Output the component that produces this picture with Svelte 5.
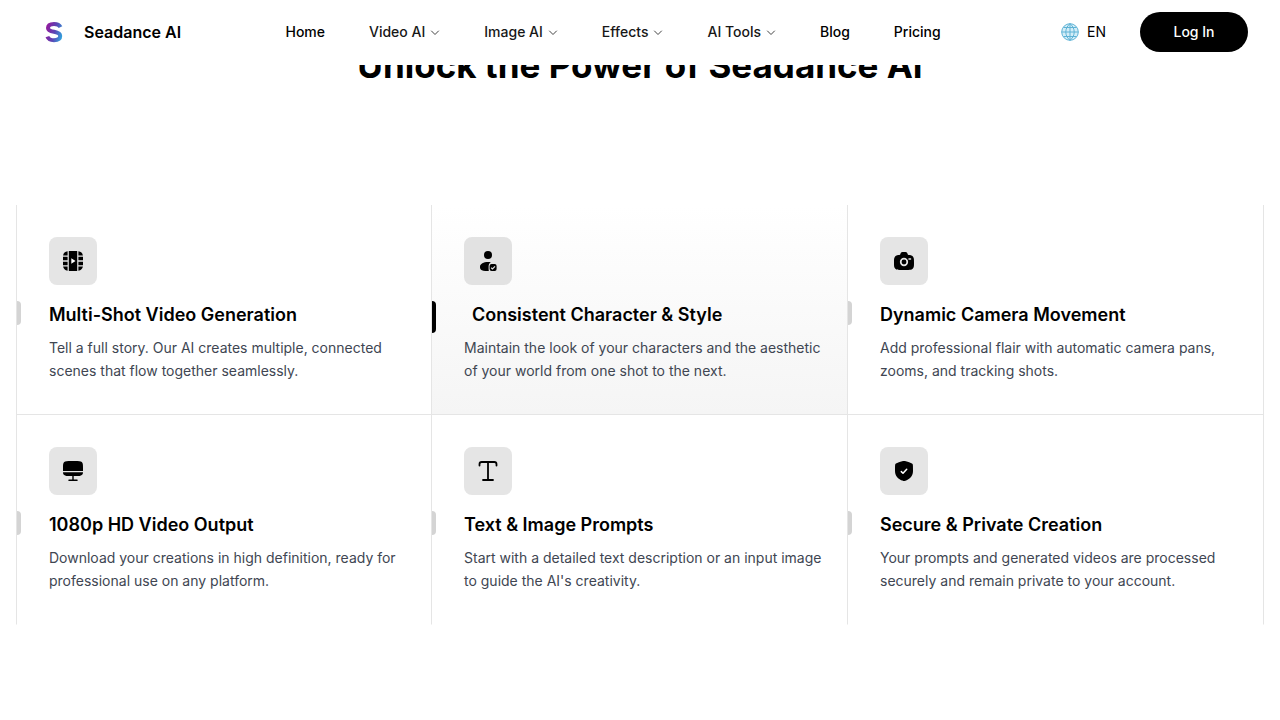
<script>
  const links = [
    { label: 'Home' },
    { label: 'Video AI', menu: true },
    { label: 'Image AI', menu: true },
    { label: 'Effects', menu: true },
    { label: 'AI Tools', menu: true },
    { label: 'Blog' },
    { label: 'Pricing' }
  ];

  const features = [
    {
      icon: 'film',
      title: 'Multi-Shot Video Generation',
      text: 'Tell a full story. Our AI creates multiple, connected scenes that flow together seamlessly.'
    },
    {
      icon: 'user',
      title: 'Consistent Character & Style',
      text: 'Maintain the look of your characters and the aesthetic of your world from one shot to the next.'
    },
    {
      icon: 'camera',
      title: 'Dynamic Camera Movement',
      text: 'Add professional flair with automatic camera pans, zooms, and tracking shots.'
    },
    {
      icon: 'monitor',
      title: '1080p HD Video Output',
      text: 'Download your creations in high definition, ready for professional use on any platform.'
    },
    {
      icon: 'text',
      title: 'Text & Image Prompts',
      text: "Start with a detailed text description or an input image to guide the AI's creativity."
    },
    {
      icon: 'shield',
      title: 'Secure & Private Creation',
      text: 'Your prompts and generated videos are processed securely and remain private to your account.'
    }
  ];

  let active = $state(1);
</script>

<header>
  <a class="brand" href="#home">
    <svg width="28" height="28" viewBox="0 0 28 28" fill="none" aria-hidden="true">
      <defs>
        <linearGradient id="brand" x1="6" y1="12" x2="23" y2="17" gradientUnits="userSpaceOnUse">
          <stop offset="0" stop-color="#8f1c9e" />
          <stop offset="0.5" stop-color="#5b45b4" />
          <stop offset="1" stop-color="#2fa8e0" />
        </linearGradient>
      </defs>
      <path
        d="M20.500 9.200C19.400 6.800 17 5.900 14 5.900c-3.600 0-6 1.500-6 4 0 2.600 2.600 3.300 6 3.900 3.800.7 6.200 1.700 6.200 4.300 0 2.600-2.500 4.100-6.200 4.100-3.300 0-5.700-1.200-6.600-3.600"
        stroke="url(#brand)"
        stroke-width="4"
      />
    </svg>
    <span>Seadance AI</span>
  </a>

  <nav>
    {#each links as link}
      {#if link.menu}
        <button class="nav-item" aria-haspopup="true">
          {link.label}
          <svg width="10" height="10" viewBox="0 0 10 10" fill="none" stroke="#444" aria-hidden="true">
            <path d="M1.500 4L5 7.500 8.500 4" stroke-linecap="round" stroke-linejoin="round" />
          </svg>
        </button>
      {:else}
        <a class="nav-item plain" href={'#' + link.label.toLowerCase()}>{link.label}</a>
      {/if}
    {/each}
  </nav>

  <div class="actions">
    <button class="lang">
      <svg width="18" height="18" viewBox="0 0 18 18" fill="none" aria-hidden="true">
        <circle cx="9" cy="9" r="8.300" fill="#d3edf7" stroke="#5fb3d6" />
        <path
          d="M9 .7v16.600M.7 9h16.600M2.500 4.500h13M2.500 13.500h13M9 .7C3.400 5 3.400 13 9 17.300M9 .7c5.600 4.300 5.600 12.300 0 16.600"
          stroke="#5fb3d6"
        />
      </svg>
      EN
    </button>
    <button class="login">Log In</button>
  </div>
</header>

<main>
  <h1>Unlock the Power of Seadance AI</h1>

  <section class="grid">
    {#each features as feature, i}
      <!-- svelte-ignore a11y_no_static_element_interactions -->
      <article class="card" class:active={active === i} onmouseenter={() => (active = i)}>
        <div class="icon">
          <svg width="24" height="24" viewBox="0 0 24 24" aria-hidden="true">
            {#if feature.icon === 'film'}
              <path d="M7.800 2h8.400v20H7.800z" />
              <path d="M6.600 2.200v4.200H2.100C2.500 4 4 2.600 6.600 2.200zM2 7.800h4.600v3.500H2zM2 12.700h4.600v3.500H2zM2.100 17.600h4.500v4.200C4 21.400 2.500 20 2.100 17.600z" />
              <path d="M17.400 2.200v4.200h4.500C21.500 4 20 2.600 17.400 2.200zM22 7.800h-4.600v3.500H22zM22 12.700h-4.600v3.500H22zM21.900 17.600h-4.500v4.200c2.600-.4 4.100-1.800 4.500-4.200z" />
              <path d="M10.300 9.300v5.400l4.200-2.700z" fill="#fff" />
            {:else if feature.icon === 'user'}
              <circle cx="12" cy="6" r="4" />
              <path d="M12.800 22H12c-8 0-8-2-8-4.500S7.600 13 12 13c1 0 2 .1 2.900.3-1.700.8-2.300 2.100-2.300 4.700 0 1.700 0 3 .2 4z" />
              <rect x="13.600" y="15" width="7" height="7" rx="2" />
              <path d="M15.200 18.700l1.300 1.200 2.500-2.500" fill="none" stroke="#e3e3e3" stroke-width="1.200" />
            {:else if feature.icon === 'camera'}
              <path d="M9.800 21h4.400c3.100 0 4.700 0 5.800-.7.500-.3.900-.7 1.200-1.200.8-1.100.8-2.600.8-5.600s0-4.500-.8-5.600c-.3-.5-.7-.9-1.200-1.200-.7-.5-1.600-.6-3-.7-.7 0-1.200-.5-1.400-1.100C15.400 3.800 14.600 3 13.600 3h-3.200c-1 0-1.800.8-2 1.900-.2.600-.7 1.100-1.400 1.100-1.400.1-2.300.2-3 .7-.5.3-.9.700-1.200 1.200C2 9 2 10.500 2 13.500s0 4.500.8 5.600c.3.500.7.900 1.200 1.200 1.100.7 2.700.7 5.800.7z" />
              <circle cx="12" cy="13" r="3.300" fill="none" stroke="#e3e3e3" stroke-width="1.700" />
              <path d="M17 10h1.500" stroke="#e3e3e3" stroke-width="1.500" stroke-linecap="round" />
            {:else if feature.icon === 'monitor'}
              <path d="M10 2h4c3.800 0 5.700 0 6.800 1.100C22 4.200 22 6 22 9v3H2V9c0-3 0-4.800 1.200-5.900C4.300 2 6.200 2 10 2z" />
              <path d="M2 13.200h20c-.1 1.500-.3 2.200-1.200 2.800-1 1-2.800 1-6.100 1h-2v3.500H16a.75.75 0 010 1.500H8a.75.75 0 010-1.500h3.300V17h-2c-3.300 0-5.100 0-6.100-1-.9-.6-1.100-1.300-1.200-2.800z" />
            {:else if feature.icon === 'text'}
              <path
                d="M12 3v18M7 21h10M3.500 6.500V5.200C3.500 3.800 4.300 3 5.700 3h12.600c1.400 0 2.200.8 2.200 2.200v1.300"
                fill="none"
                stroke="#000"
                stroke-width="1.800"
                stroke-linecap="round"
                stroke-linejoin="round"
              />
            {:else}
              <path d="M3.400 5.100C3 5.700 3 7.600 3 11.400V12c0 5.600 4.200 8.400 6.900 9.500.7.300 1.100.5 2.100.5s1.400-.2 2.100-.5C16.800 20.400 21 17.600 21 12v-.6c0-3.800 0-5.700-.4-6.300-.5-.6-2.200-1.200-5.800-2.500C13.200 2.100 12.600 2 12 2s-1.200.1-2.800.6C5.600 3.900 3.900 4.500 3.400 5.100z" />
              <path d="M9.300 12.600l1.700 1.700 3.700-4" fill="none" stroke="#fff" stroke-width="1.500" stroke-linecap="round" stroke-linejoin="round" />
            {/if}
          </svg>
        </div>
        <h2>{feature.title}</h2>
        <p>{feature.text}</p>
      </article>
    {/each}
  </section>
</main>

<style>
  :global(body) {
    background: #fff;
    color: #000;
    font-family: Inter, sans-serif;
  }

  button {
    background: none;
    border: 0;
    color: inherit;
    cursor: pointer;
    font: inherit;
    padding: 0;
  }

  a {
    color: inherit;
    text-decoration: none;
  }

  header {
    align-items: center;
    background: #fff;
    box-sizing: border-box;
    display: flex;
    height: 65px;
    justify-content: space-between;
    left: 0;
    padding: 0 32px 1px 40px;
    position: fixed;
    right: 0;
    top: 0;
    z-index: 10;
  }

  .brand {
    align-items: center;
    display: flex;
    font-size: 16px;
    font-weight: 600;
    gap: 16px;
    line-height: 24px;
  }

  nav {
    display: flex;
    gap: 44px;
  }

  .nav-item {
    align-items: center;
    color: #171717;
    display: flex;
    font-size: 14px;
    font-weight: 500;
    gap: 5px;
    line-height: 20px;
    white-space: nowrap;
  }

  .plain {
    color: #000;
  }

  .actions {
    align-items: center;
    display: flex;
    gap: 34px;
  }

  .lang {
    align-items: center;
    display: flex;
    font-size: 14px;
    gap: 8px;
    line-height: 20px;
    padding-left: 16px;
  }

  .login {
    background: #000;
    border-radius: 20px;
    color: #fff;
    font-size: 14px;
    font-weight: 500;
    line-height: 20px;
    padding: 10px 32px;
    width: 108px;
  }

  main {
    padding: 41px 16px 80px;
  }

  h1 {
    font-size: 35px;
    font-weight: 700;
    line-height: 48px;
    margin: 0 0 116px;
    text-align: center;
  }

  .grid {
    display: grid;
    grid-template-columns: repeat(3, 1fr);
  }

  .card {
    border-bottom: 1px solid #e5e5e5;
    border-right: 1px solid #e5e5e5;
    padding: 32px 16px 32px 32px;
  }

  .card:nth-child(3n + 1) {
    border-left: 1px solid #e5e5e5;
  }

  .card:nth-child(n + 4) {
    border-bottom-color: transparent;
  }

  .icon {
    align-items: center;
    background: #e5e5e5;
    border-radius: 8px;
    display: flex;
    height: 48px;
    justify-content: center;
    width: 48px;
  }

  h2 {
    font-size: 18px;
    font-weight: 600;
    line-height: 28px;
    margin: 16px 0 7px -32px;
    padding-left: 32px;
    position: relative;
  }

  h2::before {
    background: #d4d4d4;
    border-radius: 0 4px 4px 0;
    content: '';
    height: 24px;
    left: 0;
    position: absolute;
    top: 0;
    width: 4px;
  }

  p {
    color: #404652;
    font-size: 14px;
    line-height: 23px;
    margin: 0;
  }

  .active {
    background: linear-gradient(to top, #f5f5f5, #fff);
  }

  .active .icon {
    background: #e2e2e2;
  }

  .active h2 {
    padding-left: 40px;
  }

  .active h2::before {
    background: #000;
    height: 32px;
  }
</style>
